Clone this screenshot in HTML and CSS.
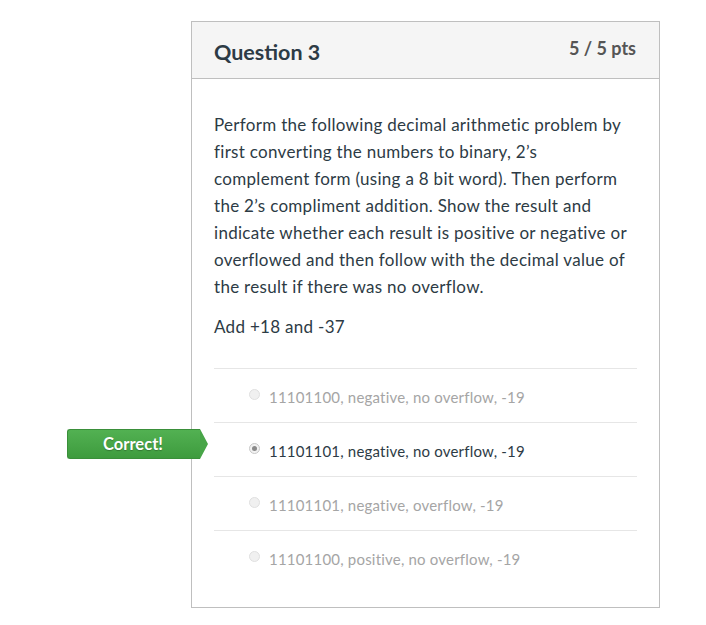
FILE: index.html
```html
<!DOCTYPE html>
<html>
<head>
<meta charset="utf-8">
<link rel="stylesheet" href="styles.css">
</head>
<body>
<div class="page">
  <div class="question">
    <div class="header">
      <h2 class="title">Question 3</h2>
      <span class="pts">5 / 5 pts</span>
    </div>
    <div class="body">
      <p class="text">Perform the following decimal arithmetic problem by first converting the numbers to binary, 2’s complement form (using a 8 bit word). Then perform the 2’s compliment addition. Show the result and indicate whether each result is positive or negative or overflowed and then follow with the decimal value of the result if there was no overflow.</p>
      <p class="text">Add +18 and -37</p>
      <div class="answers">
        <div class="answer">
          <span class="radio"></span>
          <span class="label">11101100, negative, no overflow, -19</span>
        </div>
        <div class="answer selected">
          <span class="badge">Correct!</span>
          <span class="radio"><span class="dot"></span></span>
          <span class="label">11101101, negative, no overflow, -19</span>
        </div>
        <div class="answer">
          <span class="radio"></span>
          <span class="label">11101101, negative, overflow, -19</span>
        </div>
        <div class="answer">
          <span class="radio"></span>
          <span class="label">11101100, positive, no overflow, -19</span>
        </div>
      </div>
    </div>
  </div>
</div>
</body>
</html>
```
FILE: styles.css
```css
html, body {
  margin: 0;
  padding: 0;
  background: #fff;
}
body {
  font-family: Lato, "Open Sans", sans-serif;
  color: #2d3b45;
  font-variant-ligatures: common-ligatures;
}
.page {
  padding: 21px 0 0 191px;
}
.question {
  width: 467px;
  border: 1px solid #bfbfbf;
}
.header {
  display: flex;
  justify-content: space-between;
  align-items: flex-start;
  background: #f5f5f5;
  border-bottom: 1px solid #bfbfbf;
  height: 56px;
  padding: 0 23px 0 22px;
}
.title {
  margin: 0;
  font-size: 21.5px;
  font-weight: 700;
  line-height: 28px;
  padding-top: 16px;
  color: #2d3b45;
}
.pts {
  font-size: 18px;
  font-weight: 700;
  color: #555;
  line-height: 24px;
  padding-top: 14px;
}
.body {
  padding: 32px 22px 23px 22px;
}
.text {
  margin: 0 0 13px 0;
  font-size: 17px;
  line-height: 27px;
  letter-spacing: 0.3px;
  color: #2d3b45;
}
.answers {
  margin-top: 28px;
}
.answer {
  position: relative;
  display: flex;
  align-items: center;
  height: 54px;
  border-top: 1px solid #e6e6e6;
  padding-left: 35px;
  box-sizing: border-box;
}
.radio {
  width: 11px;
  height: 11px;
  border-radius: 50%;
  border: 1px solid #e0e0e0;
  background: #f0f0f0;
  box-sizing: border-box;
  margin-right: 9px;
  display: flex;
  align-items: center;
  justify-content: center;
  position: relative;
  top: -1px;
}
.dot {
  width: 5px;
  height: 5px;
  border-radius: 50%;
  background: #8a8a8a;
}
.selected .radio {
  border-color: #c8c8c8;
  background: #f2f2f2;
}
.label {
  font-size: 15px;
  letter-spacing: 0.2px;
  color: #a5a5a5;
  position: relative;
  top: 1px;
}
.selected .label {
  color: #2d3b45;
}
.badge {
  position: absolute;
  left: -147px;
  top: 6px;
  width: 133px;
  height: 30px;
  box-sizing: border-box;
  background: linear-gradient(#52b152, #3e9b3e);
  border: 1px solid #3a8f3a;
  border-right: none;
  border-radius: 3px 0 0 3px;
  color: #fff;
  font-size: 16.5px;
  font-weight: 700;
  text-shadow: 0 1px 1px rgba(0, 0, 0, 0.25);
  display: flex;
  align-items: center;
  justify-content: center;
  padding-right: 2px;
}
.badge::after {
  content: "";
  position: absolute;
  right: -8px;
  top: -1px;
  border-top: 15px solid transparent;
  border-bottom: 15px solid transparent;
  border-left: 8px solid #48a548;
}
```
